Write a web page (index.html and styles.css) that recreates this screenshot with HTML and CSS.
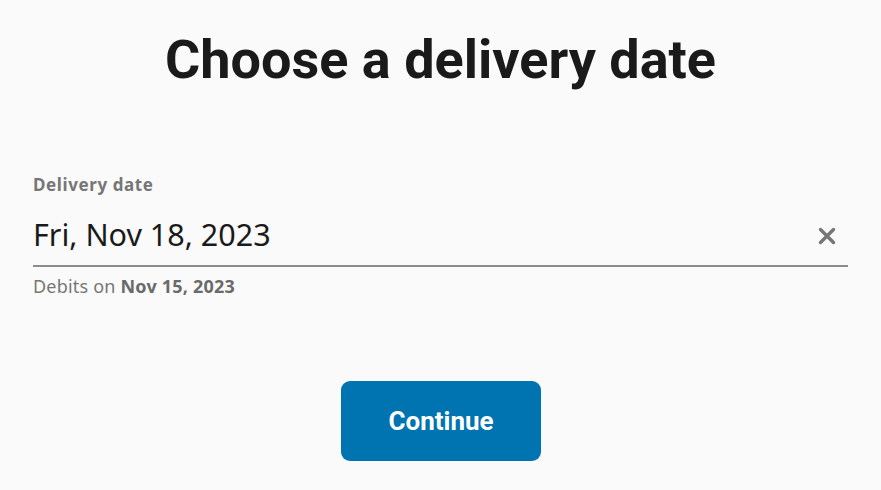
FILE: index.html
```html
<!DOCTYPE html>
<html lang="en">
<head>
    <meta charset="UTF-8">
    <meta name="viewport" content="width=device-width, initial-scale=1.0">
    <title>Choose a delivery date</title>
    <link rel="stylesheet" href="styles.css">
</head>
<body>
    <div class="page">
        <h1 class="title">Choose a delivery date</h1>

        <div class="field">
            <label class="field-label" for="deliveryDate">Delivery date</label>
            <div class="field-row">
                <input class="field-input" id="deliveryDate" type="text" value="Fri, Nov 18, 2023" readonly>
                <button class="clear-btn" aria-label="Clear">
                    <svg width="18" height="18" viewBox="0 0 18 18">
                        <path d="M2.5 2.5 L15.5 15.5 M15.5 2.5 L2.5 15.5" stroke="#767676" stroke-width="3.4" stroke-linecap="round"/>
                    </svg>
                </button>
            </div>
            <p class="field-help">Debits on <strong>Nov 15, 2023</strong></p>
        </div>

        <div class="actions">
            <button class="primary-btn">Continue</button>
        </div>
    </div>
</body>
</html>
```

FILE: styles.css
```css
html, body {
    margin: 0;
    padding: 0;
    background: #fafafa;
}
body {
    font-family: "Noto Sans", Roboto, Arial, sans-serif;
    color: #1a1a1a;
}
.page {
    padding: 24px 33px 0;
}
.title {
    margin: 0;
    text-align: center;
    font-family: Roboto, "Noto Sans", sans-serif;
    font-size: 54px;
    font-weight: 700;
    line-height: 72px;
    color: #1a1a1a;
}
.field {
    margin-top: 77px;
    width: 815px;
}
.field-label {
    display: block;
    font-size: 17px;
    font-weight: 700;
    letter-spacing: 0.6px;
    line-height: 24px;
    color: #767676;
}
.field-row {
    display: flex;
    align-items: center;
    padding: 17px 0 11px;
    border-bottom: 2px solid #8c8c8c;
}
.field-input {
    flex: 1;
    min-width: 0;
    height: 40px;
    border: none;
    background: transparent;
    font-family: "Noto Sans", sans-serif;
    font-size: 30.5px;
    line-height: 40px;
    color: #1a1a1a;
    padding: 0;
    outline: none;
}
.clear-btn {
    display: flex;
    border: none;
    background: none;
    padding: 0;
    margin: 4px 12px 0 0;
    cursor: pointer;
}
.field-help {
    margin: 7px 0 0;
    font-size: 18px;
    letter-spacing: 0.2px;
    line-height: 24px;
    color: #767676;
}
.field-help strong {
    color: #6a6a6a;
}
.actions {
    display: flex;
    justify-content: center;
    margin-top: 83px;
}
.primary-btn {
    width: 200px;
    height: 80px;
    border: none;
    border-radius: 9px;
    background: #0073b1;
    color: #fff;
    font-family: Roboto, "Noto Sans", sans-serif;
    font-size: 26px;
    font-weight: 700;
    cursor: pointer;
    margin-left: 1px;
}
```
